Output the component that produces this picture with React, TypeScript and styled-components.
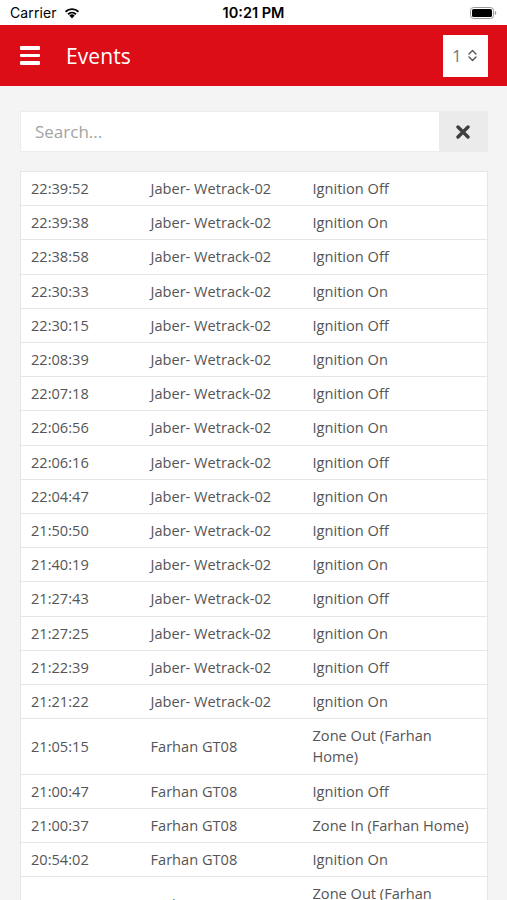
import React from "react";
import styled, { createGlobalStyle } from "styled-components";

const Global = createGlobalStyle`
  html, body { margin: 0; padding: 0; background: #f4f4f4; }
  body { font-family: "Open Sans", "Liberation Sans", sans-serif; }
  * { box-sizing: border-box; }
`;

const Page = styled.div`
  width: 507px;
  height: 900px;
  overflow: hidden;
  background: #f4f4f4;
`;

const StatusBar = styled.div`
  height: 25px;
  background: #ffffff;
  display: grid;
  grid-template-columns: 1fr auto 1fr;
  align-items: center;
  padding: 0 10px;
  font-family: Inter, Roboto, "Liberation Sans", sans-serif;
  color: #000;
`;

const Carrier = styled.div`
  display: flex;
  align-items: center;
  gap: 6px;
  font-size: 14px;
  letter-spacing: 0.1px;
`;

const Clock = styled.div`
  font-size: 14.5px;
  font-weight: 600;
`;

const BatteryWrap = styled.div`
  justify-self: end;
  display: flex;
  align-items: center;
`;

const Header = styled.header`
  height: 61px;
  background: #dc0d17;
  display: flex;
  align-items: center;
  padding: 0 19px 0 20px;
  color: #fff;
`;

const Burger = styled.div`
  width: 20px;
  display: flex;
  flex-direction: column;
  gap: 4px;
  margin-right: 26px;
`;

const Bar = styled.span`
  display: block;
  height: 3.5px;
  background: #fff;
  border-radius: 1px;
`;

const Title = styled.h1`
  margin: 0;
  font-size: 21px;
  font-weight: 400;
  flex: 1;
  letter-spacing: 0.1px;
`;

const PageSelect = styled.div`
  width: 45px;
  height: 42px;
  background: #fff;
  display: flex;
  align-items: center;
  padding-left: 9px;
  gap: 5px;
  color: #777;
  font-size: 17px;
`;

const Content = styled.main`
  padding: 25px 19px 0 20px;
`;

const SearchRow = styled.div`
  display: flex;
  height: 41px;
  border: 1px solid #ececec;
  margin-bottom: 19px;
`;

const SearchInput = styled.input`
  flex: 1;
  border: none;
  outline: none;
  background: #fff;
  padding: 0 14px;
  font-family: "Open Sans", "Liberation Sans", sans-serif;
  font-size: 17px;
  color: #555;
  &::placeholder { color: #a3a3a3; }
`;

const ClearButton = styled.button`
  width: 48px;
  border: none;
  background: #ebebeb;
  display: flex;
  align-items: center;
  justify-content: center;
  padding: 0;
`;

const Table = styled.table`
  width: 100%;
  border-collapse: collapse;
  background: #fff;
  table-layout: fixed;
  border: 1px solid #e6e6e6;
`;

const Row = styled.tr`
  border-bottom: 1px solid #e6e6e6;
`;

const Cell = styled.td<{ $w?: number }>`
  ${(p) => (p.$w ? `width: ${p.$w}px;` : "")}
  padding: 6px 10px;
  font-size: 14.6px;
  line-height: 21.2px;
  color: #555;
  vertical-align: middle;
`;

const events: [string, string, string][] = [
  ["22:39:52", "Jaber- Wetrack-02", "Ignition Off"],
  ["22:39:38", "Jaber- Wetrack-02", "Ignition On"],
  ["22:38:58", "Jaber- Wetrack-02", "Ignition Off"],
  ["22:30:33", "Jaber- Wetrack-02", "Ignition On"],
  ["22:30:15", "Jaber- Wetrack-02", "Ignition Off"],
  ["22:08:39", "Jaber- Wetrack-02", "Ignition On"],
  ["22:07:18", "Jaber- Wetrack-02", "Ignition Off"],
  ["22:06:56", "Jaber- Wetrack-02", "Ignition On"],
  ["22:06:16", "Jaber- Wetrack-02", "Ignition Off"],
  ["22:04:47", "Jaber- Wetrack-02", "Ignition On"],
  ["21:50:50", "Jaber- Wetrack-02", "Ignition Off"],
  ["21:40:19", "Jaber- Wetrack-02", "Ignition On"],
  ["21:27:43", "Jaber- Wetrack-02", "Ignition Off"],
  ["21:27:25", "Jaber- Wetrack-02", "Ignition On"],
  ["21:22:39", "Jaber- Wetrack-02", "Ignition Off"],
  ["21:21:22", "Jaber- Wetrack-02", "Ignition On"],
  ["21:05:15", "Farhan GT08", "Zone Out (Farhan Home)"],
  ["21:00:47", "Farhan GT08", "Ignition Off"],
  ["21:00:37", "Farhan GT08", "Zone In (Farhan Home)"],
  ["20:54:02", "Farhan GT08", "Ignition On"],
  ["20:54:02", "Farhan GT08", "Zone Out (Farhan Home)"],
];

const Wifi = () => (
  <svg width="18" height="13" viewBox="0 0 18 13">
    <path d="M9 12.5 L6.3 9.6 A3.9 3.9 0 0 1 11.7 9.6 Z" fill="#000" />
    <path d="M4.4 7.6 A6.6 6.6 0 0 1 13.6 7.6 L12.3 8.9 A4.8 4.8 0 0 0 5.7 8.9 Z" fill="#000" />
    <path d="M1.9 5.1 A10.2 10.2 0 0 1 16.1 5.1 L14.8 6.4 A8.4 8.4 0 0 0 3.2 6.4 Z" fill="#000" />
  </svg>
);

const Battery = () => (
  <svg width="27" height="12" viewBox="0 0 27 12">
    <rect x="0.5" y="0.5" width="23" height="11" rx="3" fill="none" stroke="#9a9a9a" />
    <rect x="2" y="2" width="20" height="8" rx="1.5" fill="#000" />
    <path d="M24.8 4 Q26.3 4.3 26.3 6 Q26.3 7.7 24.8 8 Z" fill="#9a9a9a" />
  </svg>
);

const Chevrons = () => (
  <svg width="11" height="13" viewBox="0 0 11 13">
    <path d="M2 5 L5.5 1.6 L9 5" fill="none" stroke="#555" strokeWidth="1.4" strokeLinecap="round" strokeLinejoin="round" />
    <path d="M2 8 L5.5 11.4 L9 8" fill="none" stroke="#555" strokeWidth="1.4" strokeLinecap="round" strokeLinejoin="round" />
  </svg>
);

const Cross = () => (
  <svg width="14" height="14" viewBox="0 0 14 14">
    <path d="M2 2 L12 12 M12 2 L2 12" stroke="#3e3e3e" strokeWidth="3.4" strokeLinecap="round" />
  </svg>
);

export default function App() {
  return (
    <Page>
      <Global />
      <StatusBar>
        <Carrier>
          Carrier
          <Wifi />
        </Carrier>
        <Clock>10:21 PM</Clock>
        <BatteryWrap>
          <Battery />
        </BatteryWrap>
      </StatusBar>
      <Header>
        <Burger>
          <Bar />
          <Bar />
          <Bar />
        </Burger>
        <Title>Events</Title>
        <PageSelect>
          1
          <Chevrons />
        </PageSelect>
      </Header>
      <Content>
        <SearchRow>
          <SearchInput placeholder="Search..." />
          <ClearButton aria-label="Clear">
            <Cross />
          </ClearButton>
        </SearchRow>
        <Table>
          <tbody>
            {events.map(([t, n, e], i) => (
              <Row key={i}>
                <Cell $w={120}>{t}</Cell>
                <Cell $w={162}>{n}</Cell>
                <Cell>{e}</Cell>
              </Row>
            ))}
          </tbody>
        </Table>
      </Content>
    </Page>
  );
}
